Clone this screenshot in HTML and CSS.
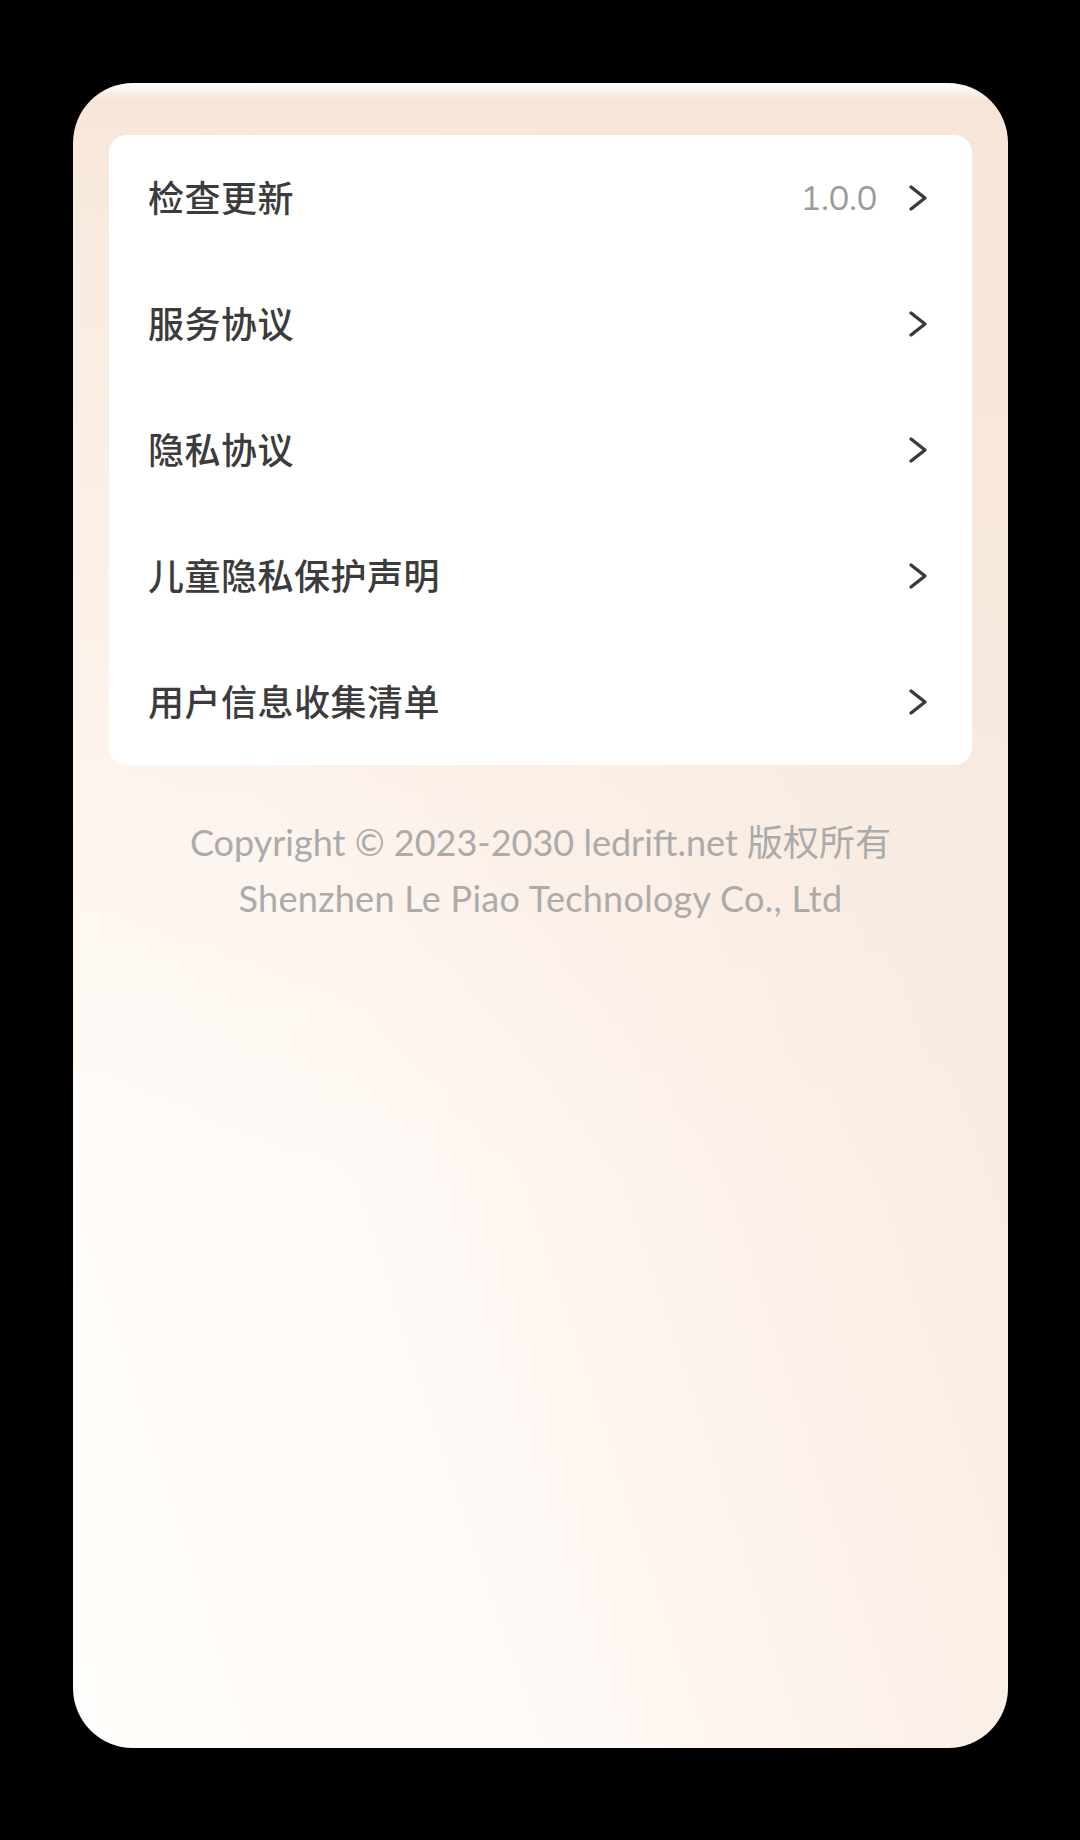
FILE: index.html
```html
<!DOCTYPE html>
<html lang="zh-CN">
<head>
<meta charset="utf-8">
<title>关于</title>
<link rel="stylesheet" href="styles.css">
</head>
<body>
<div class="screen">
  <div class="menu-card">
    <div class="row">
      <span class="label">检查更新</span>
      <span class="value">1.0.0</span>
      <svg class="chev" viewBox="0 0 20 28" width="20" height="28"><path d="M3 3 L17 14 L3 25" fill="none" stroke="#3a3a3a" stroke-width="3.4" stroke-linecap="round" stroke-linejoin="round"/></svg>
    </div>
    <div class="row">
      <span class="label">服务协议</span>
      <svg class="chev" viewBox="0 0 20 28" width="20" height="28"><path d="M3 3 L17 14 L3 25" fill="none" stroke="#3a3a3a" stroke-width="3.4" stroke-linecap="round" stroke-linejoin="round"/></svg>
    </div>
    <div class="row">
      <span class="label">隐私协议</span>
      <svg class="chev" viewBox="0 0 20 28" width="20" height="28"><path d="M3 3 L17 14 L3 25" fill="none" stroke="#3a3a3a" stroke-width="3.4" stroke-linecap="round" stroke-linejoin="round"/></svg>
    </div>
    <div class="row">
      <span class="label">儿童隐私保护声明</span>
      <svg class="chev" viewBox="0 0 20 28" width="20" height="28"><path d="M3 3 L17 14 L3 25" fill="none" stroke="#3a3a3a" stroke-width="3.4" stroke-linecap="round" stroke-linejoin="round"/></svg>
    </div>
    <div class="row">
      <span class="label">用户信息收集清单</span>
      <svg class="chev" viewBox="0 0 20 28" width="20" height="28"><path d="M3 3 L17 14 L3 25" fill="none" stroke="#3a3a3a" stroke-width="3.4" stroke-linecap="round" stroke-linejoin="round"/></svg>
    </div>
  </div>
  <div class="copyright">
    <p>Copyright © 2023-2030 ledrift.net 版权所有</p>
    <p class="company">Shenzhen Le Piao Technology Co., Ltd</p>
  </div>
</div>
</body>
</html>
```

FILE: styles.css
```css
html, body {
  margin: 0;
  padding: 0;
  background: #000;
}
body {
  width: 1080px;
  height: 1840px;
  padding: 83px 0 0 73px;
  box-sizing: border-box;
  font-family: "Noto Sans", "Noto Sans CJK SC", sans-serif;
}
.screen {
  width: 935px;
  height: 1665px;
  border-radius: 60px;
  overflow: hidden;
  box-sizing: border-box;
  padding: 52px 36px 0 36px;
  background:
    linear-gradient(180deg, #ffffff 0px, #f7e6d8 16px, rgba(247, 230, 216, 0.85) 60px, rgba(248, 234, 222, 0.35) 720px, rgba(250, 240, 232, 0) 1100px),
    linear-gradient(72deg, #fffdfb 0%, #fff9f5 35%, #fcf1ea 58%, #f8ebe1 80%, #f7e8dc 100%);
}
.menu-card {
  background: #ffffff;
  border-radius: 18px;
  display: flex;
  flex-direction: column;
}
.row {
  height: 126px;
  display: flex;
  align-items: center;
  padding: 0 44px 0 39px;
}
.label {
  flex: 1;
  font-family: "Noto Sans CJK SC", sans-serif;
  font-size: 36px;
  font-weight: 500;
  line-height: 1;
  color: #3c3c3c;
  letter-spacing: 0.5px;
  margin-bottom: 4px;
}
.value {
  font-family: "Nunito", "Lato", "Noto Sans", sans-serif;
  font-size: 35px;
  line-height: 1;
  color: #9b9b9b;
  margin-right: 31px;
  letter-spacing: -0.5px;
}
.chev {
  display: block;
  flex: none;
}
.copyright {
  margin-top: 49px;
  text-align: center;
  color: #ababab;
  font-family: "Lato", "Noto Sans CJK SC", sans-serif;
  font-size: 36px;
  line-height: 56px;
}
.copyright p {
  margin: 0;
}
.copyright .company {
  letter-spacing: 0.3px;
}
```
